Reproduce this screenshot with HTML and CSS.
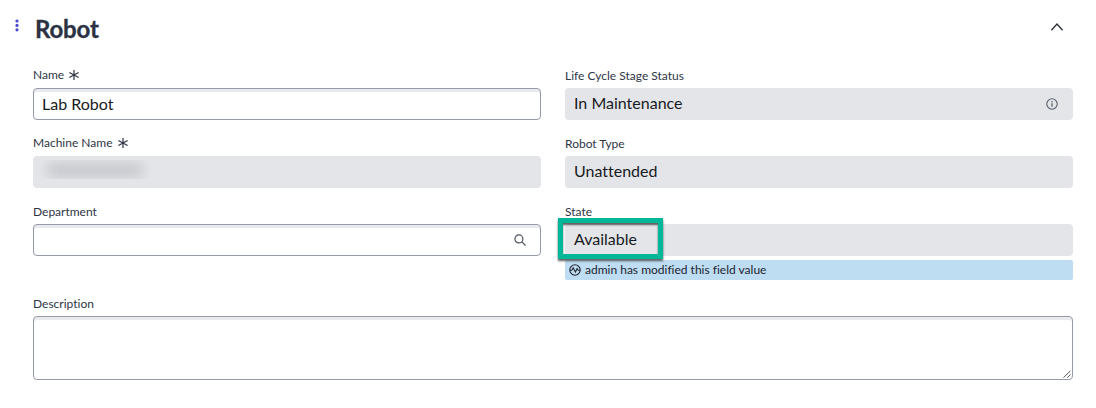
FILE: index.html
```html
<!DOCTYPE html>
<html lang="en">
<head>
<meta charset="utf-8">
<title>Robot</title>
<link rel="stylesheet" href="styles.css">
</head>
<body>
<header class="header">
  <svg class="dots" width="4" height="14" viewBox="0 0 4 14"><circle cx="2" cy="2" r="1.6"/><circle cx="2" cy="6.4" r="1.6"/><circle cx="2" cy="10.8" r="1.6"/></svg>
  <h1 class="title">Robot</h1>
  <svg class="chevron" width="14" height="10" viewBox="0 0 14 10"><path d="M1.4 8.2 7 2l5.6 6.2"/></svg>
</header>
<main class="form">
  <div class="field">
    <div class="label">Name <svg class="required" width="10" height="10" viewBox="0 0 10 10"><path d="M5 0v10M.4 2.5l9.2 5M9.6 2.5l-9.2 5"/></svg></div>
    <div class="box editable name">Lab Robot</div>
  </div>
  <div class="field">
    <div class="label label-low">Life Cycle Stage Status</div>
    <div class="box readonly">In Maintenance
      <svg class="info" width="12" height="12" viewBox="0 0 12 12"><circle cx="6" cy="6" r="5.2"/><path d="M6 5.3v3.4M6 3.1v1.3"/></svg>
    </div>
  </div>
  <div class="field">
    <div class="label">Machine Name <svg class="required" width="10" height="10" viewBox="0 0 10 10"><path d="M5 0v10M.4 2.5l9.2 5M9.6 2.5l-9.2 5"/></svg></div>
    <div class="box readonly machine"><div class="redaction"><div class="smudge"></div></div></div>
  </div>
  <div class="field">
    <div class="label label-low">Robot Type</div>
    <div class="box readonly">Unattended</div>
  </div>
  <div class="field">
    <div class="label label-low">Department</div>
    <div class="box editable department">
      <svg class="search" width="12" height="12" viewBox="0 0 12 12"><circle cx="4.9" cy="4.9" r="4"/><path d="m7.8 7.8 3.7 3.7"/></svg>
    </div>
  </div>
  <div class="field">
    <div class="label label-low">State</div>
    <div class="box readonly state">Available<div class="highlight"></div></div>
    <div class="note">
      <svg class="activity" width="12" height="12" viewBox="0 0 12 12"><circle cx="6" cy="6" r="5.2"/><path d="M1 6.2h1.8l1.4-2.4 2.2 4.3 1.7-3.5 1 1.6H11"/></svg>
      <span>admin has modified this field value</span>
    </div>
  </div>
  <div class="field wide">
    <div class="label label-low">Description</div>
    <div class="box editable description">
      <svg class="grip" width="8" height="8" viewBox="0 0 8 8"><path d="M.5 7.7 7.5.7M4.3 7.7l3.2-3.2"/></svg>
    </div>
  </div>
</main>
</body>
</html>
```
FILE: styles.css
```css
* { box-sizing: border-box; }
body {
  margin: 0;
  height: 408px;
  background: #fff;
  font-family: Lato, sans-serif;
  font-variant-ligatures: none;
  color: #2e3545;
  overflow: hidden;
}
svg { display: block; flex: none; fill: none; stroke: currentColor; }
.header {
  display: flex;
  align-items: flex-start;
  height: 66px;
  padding: 0 26px 0 15px;
}
.dots { margin-top: 19px; fill: #4a48cf; stroke: none; }
.title {
  margin: 14px 0 0 16px;
  font-size: 24px;
  line-height: 30px;
  font-weight: 700;
  letter-spacing: -.15px;
  color: #2b3242;
  -webkit-text-stroke: .3px #2b3242;
}
.chevron { margin: 22px 6px 0 auto; stroke: #2b3038; stroke-width: 1.3; }
.form {
  display: grid;
  grid-template-columns: 508px 508px;
  column-gap: 24px;
  row-gap: 14px;
  padding-left: 33px;
}
.wide { grid-column: 1 / -1; }
.label {
  display: flex;
  align-items: center;
  gap: 5px;
  height: 22px;
  padding-bottom: 4px;
  font-size: 12px;
  line-height: 18px;
  white-space: nowrap;
}
.label-low { padding: 1px 0 3px; }
.required { stroke-width: 1.2; }
.box {
  display: flex;
  align-items: center;
  height: 32px;
  padding: 0 9px 2px;
  border-radius: 4px;
  font-size: 16px;
  line-height: 24px;
  color: #181b22;
}
.readonly { background: #e4e5e9; }
.editable {
  border: 1px solid #959aaa;
  padding: 0 8px;
  background: #fff;
  box-shadow: inset 0 3px 0 #e9eaeb;
}
.info { margin: 1px 6px 0 auto; color: #555c6b; }
.info circle { stroke-width: 1.1; }
.info path { stroke-width: 1.2; }
.machine { align-items: flex-start; padding: 4px 3px; }
.redaction { width: 114px; height: 19px; overflow: hidden; background: #e5e6e9; }
.smudge { width: 96px; height: 16px; margin: 2px 11px; background: #c9cacf; filter: blur(6px); }
.search { margin: 0 6px 0 auto; color: #4d5362; stroke-width: 1.2; }
.state { position: relative; }
.highlight {
  position: absolute;
  left: -7px;
  top: -6px;
  width: 105px;
  height: 41px;
  border: 5px solid #00b899;
  box-shadow: 0 2px 2px rgba(40, 40, 40, .75), inset 0 2px 2px rgba(40, 40, 40, .75);
}
.note {
  display: flex;
  align-items: center;
  gap: 4px;
  height: 20px;
  margin-top: 4px;
  padding: 0 4px;
  border-radius: 2px;
  background: #bedcf2;
  font-size: 12px;
  line-height: 18px;
  color: #20252f;
}
.activity { stroke-width: 1.1; }
.description { height: 64px; align-items: flex-end; justify-content: flex-end; padding: 0 1px 1px; }
.grip { color: #555; stroke-width: 1; }
```
